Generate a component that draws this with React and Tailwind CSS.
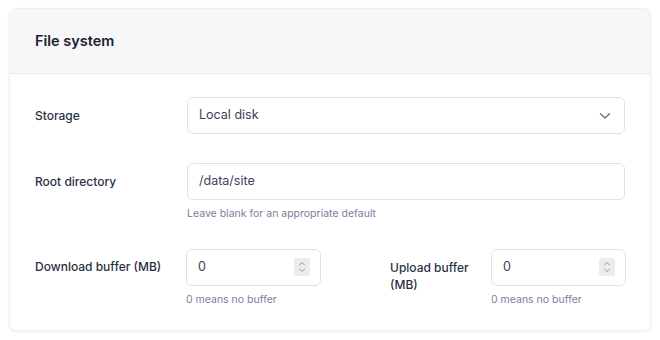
import React from "react";

function Spinner() {
  return (
    <div className="flex h-[18px] w-[16px] flex-col items-center justify-center rounded-[2px] bg-[#ececef]">
      <svg width="8" height="14" viewBox="0 0 8 14" fill="none" stroke="#8a8fa6" strokeWidth="1" strokeLinecap="round" strokeLinejoin="round">
        <path d="M1.5 5 L4 2.5 L6.5 5" />
        <path d="M1.5 9 L4 11.5 L6.5 9" />
      </svg>
    </div>
  );
}

function NumberInput() {
  return (
    <div className="flex h-[37px] w-[135px] items-center justify-between rounded-[6px] border border-[#dfe0ea] bg-white pl-[11px] pr-[10px] text-[12.5px] text-[#3c4257]">
      <span>0</span>
      <Spinner />
    </div>
  );
}

export default function App() {
  return (
    <div className="h-[340px] w-[660px] bg-white pl-[9px] pr-[9px] pt-[8px]" style={{ fontFamily: "Inter, 'Noto Sans', sans-serif" }}>
      <div className="overflow-hidden rounded-[7px] border border-[#efeff2] bg-white shadow-[0_1px_3px_rgba(0,0,0,0.06)]">
        <div className="flex h-[65px] items-center border-b border-[#ebebee] bg-[#f7f7f8] px-[25px]">
          <h2 className="text-[14.5px] font-semibold text-[#1b2035]">File system</h2>
        </div>
        <div className="px-[25px] pb-[22px] pt-[23px]">
          <div className="flex items-center">
            <div className="w-[152px] text-[12px] font-medium text-[#2b3144]">Storage</div>
            <div className="flex h-[37px] flex-1 items-center justify-between rounded-[6px] border border-[#dfe0ea] bg-white pl-[11px] pr-[13px] text-[12.5px] text-[#3c4257]">
              <span>Local disk</span>
              <svg width="12" height="8" viewBox="0 0 12 8" fill="none" stroke="#6b7091" strokeWidth="1.4" strokeLinecap="round" strokeLinejoin="round">
                <path d="M1.5 1.75 L6 6 L10.5 1.75" />
              </svg>
            </div>
          </div>
          <div className="mt-[29px] flex">
            <div className="flex h-[37px] w-[152px] items-center text-[12px] font-medium text-[#2b3144]">Root directory</div>
            <div className="flex-1">
              <div className="flex h-[37px] items-center rounded-[6px] border border-[#dfe0ea] bg-white pl-[11px] text-[12.5px] text-[#3c4257]">
                /data/site
              </div>
              <div className="mt-[6px] text-[10.5px] text-[#7b7f9c]">Leave blank for an appropriate default</div>
            </div>
          </div>
          <div className="mt-[27px] flex">
            <div className="flex w-[286px]">
              <div className="flex h-[37px] w-[152px] items-center text-[12px] font-medium text-[#2b3144]">Download buffer (MB)</div>
              <div>
                <NumberInput />
                <div className="mt-[6px] text-[10.5px] text-[#7b7f9c]">0 means no buffer</div>
              </div>
            </div>
            <div className="ml-[69px] flex">
              <div className="w-[101px] pt-[10px] text-[12px] font-medium leading-[17px] text-[#2b3144]">Upload buffer (MB)</div>
              <div>
                <NumberInput />
                <div className="mt-[6px] text-[10.5px] text-[#7b7f9c]">0 means no buffer</div>
              </div>
            </div>
          </div>
        </div>
      </div>
    </div>
  );
}
